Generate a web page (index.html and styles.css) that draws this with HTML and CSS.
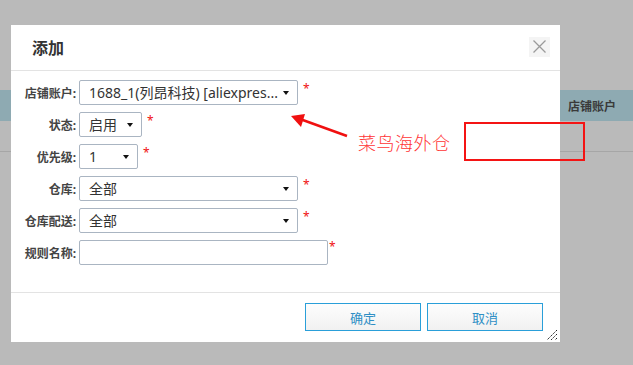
FILE: index.html
```html
<!DOCTYPE html>
<html lang="zh-CN">
<head>
    <meta charset="UTF-8">
    <title>添加规则</title>
    <link rel="stylesheet" href="styles.css">
</head>
<body>

    <!-- page behind the dialog -->
    <div class="page">
        <div class="grid-head">
            <span class="col-shop">店铺账户</span>
        </div>
        <div class="grid-row"></div>
    </div>

    <!-- dialog -->
    <div class="modal">
        <div class="modal-header">
            <h3>添加</h3>
            <span class="close">
                <svg width="13" height="13" viewBox="0 0 13 13"><path d="M0.5 0.5 L12.5 12.5 M12.5 0.5 L0.5 12.5" stroke="#9a9a9a" stroke-width="1.3" fill="none"/></svg>
            </span>
        </div>
        <form class="modal-body">
            <div class="form-row">
                <label>店铺账户:</label>
                <span class="select w-long"><select><option>1688_1(列昂科技) [aliexpres...</option></select></span>
                <span class="req">*</span>
            </div>
            <div class="form-row">
                <label>状态:</label>
                <span class="select w-state"><select><option>启用</option></select></span>
                <span class="req">*</span>
            </div>
            <div class="form-row">
                <label>优先级:</label>
                <span class="select w-prio"><select><option>1</option></select></span>
                <span class="req">*</span>
            </div>
            <div class="form-row">
                <label>仓库:</label>
                <span class="select w-long"><select><option>全部</option></select></span>
                <span class="req">*</span>
            </div>
            <div class="form-row">
                <label>仓库配送:</label>
                <span class="select w-long"><select><option>全部</option></select></span>
                <span class="req">*</span>
            </div>
            <div class="form-row">
                <label>规则名称:</label>
                <input type="text" class="text-input">
                <span class="req">*</span>
            </div>
        </form>
        <div class="modal-footer">
            <button type="button" class="btn">确定</button>
            <button type="button" class="btn">取消</button>
        </div>
        <svg class="resize" width="12" height="12" viewBox="0 0 12 12"><path d="M11 1 L1 11 M11 5 L5 11 M11 9 L9 11" stroke="#222" stroke-width="1" stroke-dasharray="1.5 0.8" fill="none"/></svg>
    </div>

    <!-- annotation drawn on the screenshot -->
    <svg class="note-arrow" width="633" height="365" viewBox="0 0 633 365">
        <line x1="347" y1="136" x2="300" y2="119" stroke="#f01010" stroke-width="2.5"/>
        <polygon points="291,116 305,114 301,127" fill="#f01010"/>
    </svg>
    <span class="note-text">菜鸟海外仓</span>
    <div class="note-box"></div>

</body>
</html>
```

FILE: styles.css
```css
body {
    margin: 0;
    width: 633px;
    height: 365px;
    overflow: hidden;
    background-color: #bababa;
    font-family: "Noto Sans", "Noto Sans CJK SC", sans-serif;
    color: #333;
    position: relative;
}
/* page behind */
.page {
    padding-top: 90px;
}
.grid-head {
    height: 31px;
    background-color: #8eaab2;
    display: flex;
    align-items: center;
}
.col-shop {
    margin-left: 568px;
    font-size: 12px;
    font-weight: bold;
    color: #3a3a3a;
}
.grid-row {
    height: 30px;
    border-bottom: 1px solid #a6a6a6;
}
/* dialog */
.modal {
    position: absolute;
    left: 11px;
    top: 25px;
    width: 549px;
    height: 317px;
    background-color: #fff;
    display: flex;
    flex-direction: column;
}
.modal-header {
    height: 45px;
    border-bottom: 1px solid #e3e3e3;
    display: flex;
    align-items: center;
    justify-content: space-between;
    padding: 0 10px 0 21px;
}
.modal-header h3 {
    margin: 0;
    font-size: 16px;
    font-weight: bold;
    color: #333;
    padding-bottom: 2px;
}
.close {
    width: 21px;
    height: 20px;
    background-color: #f4f4f4;
    display: flex;
    align-items: center;
    justify-content: center;
    margin-top: -2px;
}
.modal-body {
    margin: 0;
    padding: 9px 0 0 0;
    flex: 1;
    display: flex;
    flex-direction: column;
    gap: 7px;
}
.form-row {
    display: flex;
    align-items: center;
    height: 25px;
}
.form-row label {
    width: 65px;
    text-align: right;
    font-size: 12px;
    font-weight: bold;
    color: #444;
    margin-right: 3px;
}
.select {
    position: relative;
    height: 25px;
    box-sizing: border-box;
}
.select select {
    appearance: none;
    -webkit-appearance: none;
    width: 100%;
    height: 25px;
    box-sizing: border-box;
    border: 1px solid #aab5c2;
    border-radius: 2px;
    background-color: #fff;
    padding: 0 8px 0 9px;
    font-family: "Noto Sans", "Noto Sans CJK SC", sans-serif;
    font-size: 14px;
    color: #333;
    outline: none;
}
.select::after {
    content: "";
    position: absolute;
    right: 9px;
    top: 11px;
    border-left: 3.5px solid transparent;
    border-right: 3.5px solid transparent;
    border-top: 4px solid #111;
}
.w-long { width: 219px; }
.w-state { width: 63px; }
.w-prio { width: 59px; }
.text-input {
    width: 249px;
    height: 25px;
    box-sizing: border-box;
    border: 1px solid #aab5c2;
    border-radius: 2px;
    outline: none;
}
.req {
    color: #f01010;
    font-size: 12px;
    align-self: flex-start;
    margin-left: 5px;
    line-height: 14px;
    margin-top: 2px;
}
.text-input + .req {
    margin-left: 1px;
    margin-top: 0;
}
.modal-footer {
    height: 50px;
    border-top: 1px solid #e3e3e3;
    display: flex;
    justify-content: flex-end;
    align-items: flex-start;
    padding: 10px 17px 0 0;
    gap: 6px;
    box-sizing: border-box;
}
.btn {
    width: 116px;
    height: 28px;
    border: 1px solid #2a9fd9;
    background: linear-gradient(#fdfdfd, #f1f1f1);
    color: #2f8fc5;
    font-family: "Noto Sans", "Noto Sans CJK SC", sans-serif;
    font-size: 13px;
    padding: 0;
    cursor: pointer;
}
.resize {
    position: absolute;
    right: 2px;
    bottom: 1px;
}
/* annotation */
.note-arrow {
    position: absolute;
    left: 0;
    top: 0;
}
.note-text {
    position: absolute;
    left: 358px;
    top: 129px;
    font-size: 18px;
    font-weight: 300;
    color: #ff3434;
    letter-spacing: 0.5px;
}
.note-box {
    position: absolute;
    left: 464px;
    top: 122px;
    width: 121px;
    height: 39px;
    box-sizing: border-box;
    border: 2px solid #f41414;
}
```
